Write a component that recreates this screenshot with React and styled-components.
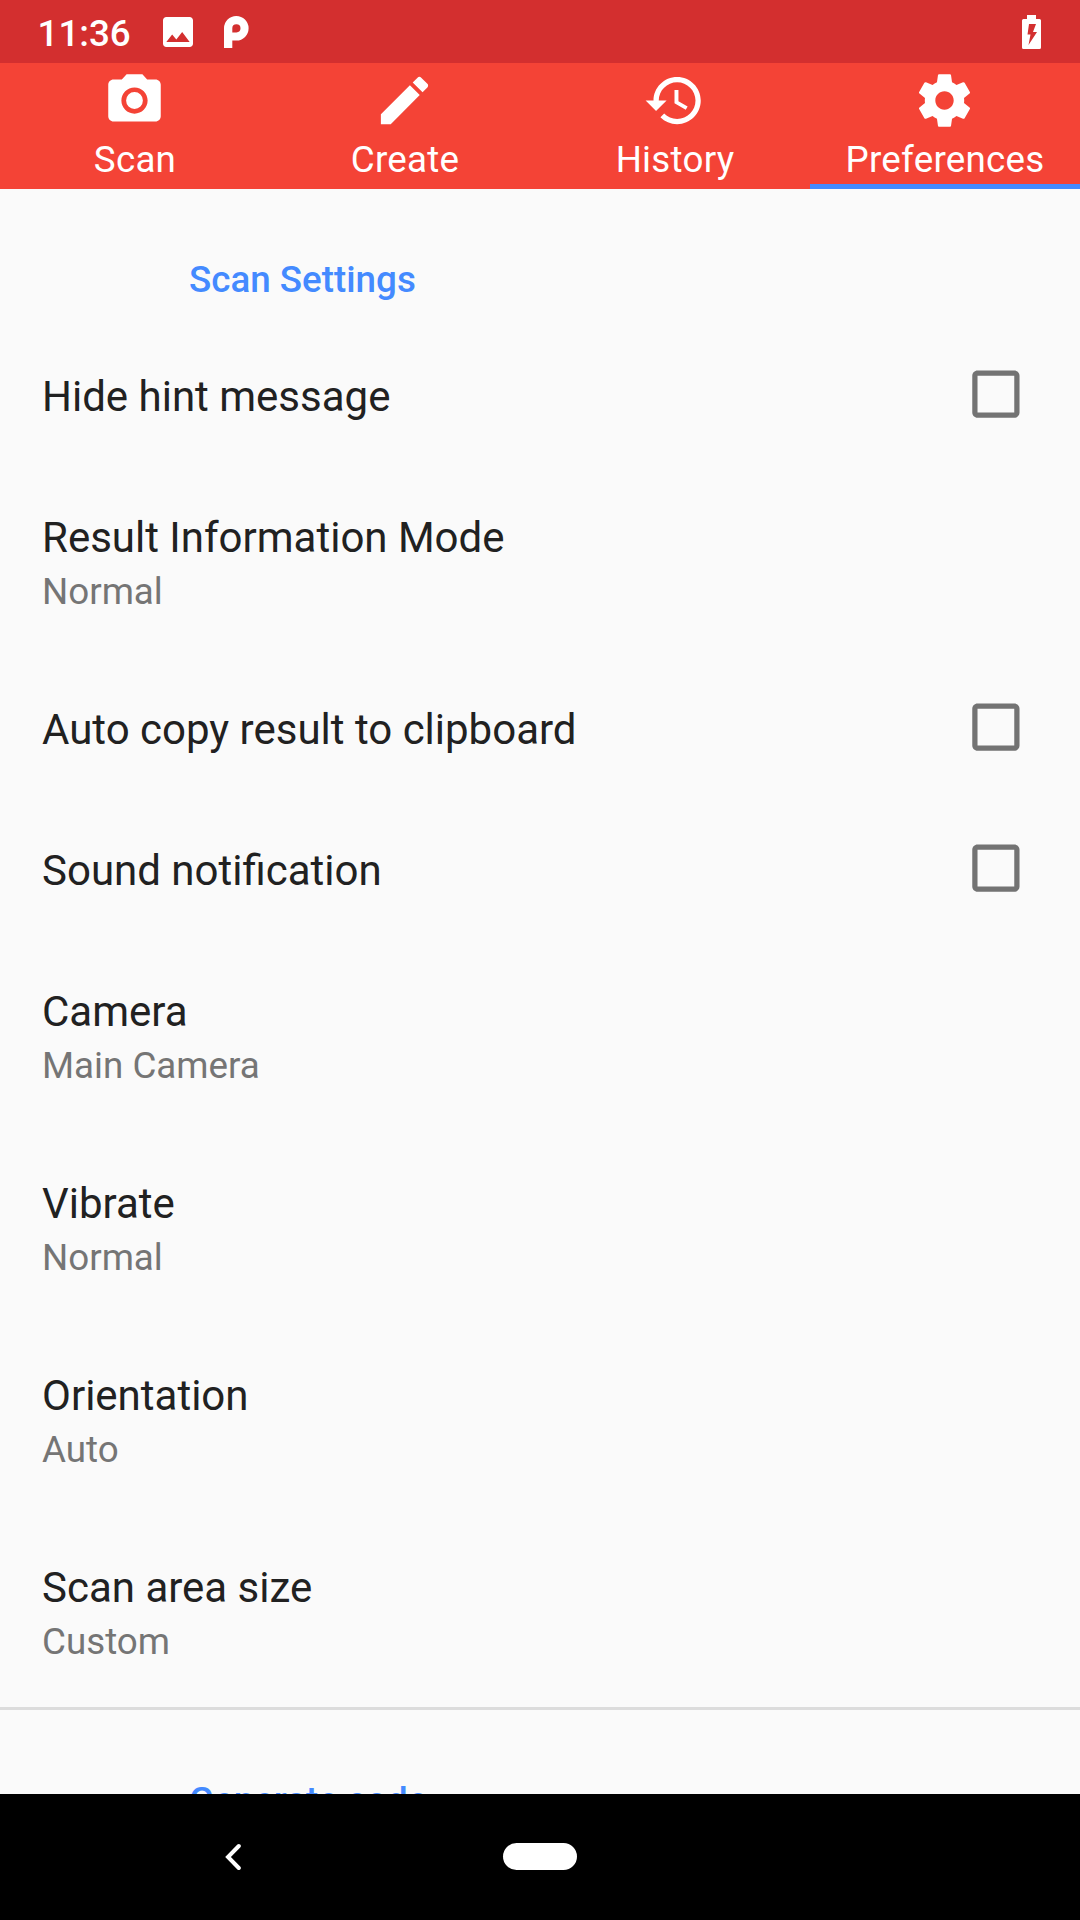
import React from "react";
import styled, { createGlobalStyle } from "styled-components";

const Global = createGlobalStyle`
  html, body { margin: 0; padding: 0; background: #fafafa; }
  * { box-sizing: border-box; }
`;

const Screen = styled.div`
  width: 1080px;
  height: 1920px;
  display: flex;
  flex-direction: column;
  overflow: hidden;
  background: #fafafa;
  font-family: Roboto, "Liberation Sans", sans-serif;
`;

const StatusBar = styled.header`
  height: 63px;
  flex: none;
  display: flex;
  align-items: center;
  justify-content: space-between;
  padding: 0 39px 0 37.5px;
  background: #d32f2f;
  color: #fff;
`;

const StatusGroup = styled.div`
  display: flex;
  align-items: center;
`;

const Clock = styled.span`
  width: 125.5px;
  padding-top: 3px;
  font-size: 36.75px;
  line-height: 43px;
  font-weight: 500;
`;

const StatusIcon = styled.svg`
  display: block;
  fill: #fff;
  margin-left: ${(p) => p.$gap || 0}px;
`;

const TabBar = styled.nav`
  height: 126px;
  flex: none;
  display: grid;
  grid-template-columns: repeat(4, 1fr);
  background: #f44336;
`;

const Tab = styled.div`
  display: flex;
  flex-direction: column;
  align-items: center;
  gap: 6px;
  padding-top: 6px;
  color: #fff;
  font-size: 36.75px;
  line-height: 43px;
  letter-spacing: 0.25px;
  box-shadow: ${(p) => (p.$active ? "inset 0 -5px #448aff" : "none")};
`;

const TabIcon = styled.svg`
  width: 63px;
  height: 63px;
  margin-right: 1px;
  fill: #fff;
`;

const Content = styled.main`
  flex: 1;
  min-height: 0;
  overflow: hidden;
`;

const SectionTitle = styled.h2`
  margin: 0;
  height: 137px;
  padding: 69px 0 0 189px;
  font-size: 36.75px;
  line-height: 43px;
  font-weight: 500;
  color: #448aff;
`;

const Row = styled.div`
  display: flex;
  justify-content: space-between;
  padding: 46px 53px 46px 42px;
`;

const RowText = styled.div`
  display: flex;
  flex-direction: column;
  gap: 8px;
`;

const RowTitle = styled.div`
  font-size: 42px;
  line-height: 49px;
  color: #212121;
`;

const RowSummary = styled.div`
  font-size: 36.75px;
  line-height: 43px;
  color: #757575;
`;

const Checkbox = styled.svg`
  width: 63px;
  height: 63px;
  margin: -9px 0 -5px;
  fill: #737373;
`;

const Divider = styled.hr`
  height: 3px;
  margin: -2px 0 0;
  border: 0;
  background: #dcdcdc;
`;

const NavBar = styled.footer`
  height: 126px;
  flex: none;
  display: grid;
  grid-template-columns: 466px 148px 466px;
  align-items: center;
  justify-items: center;
  background: #000;
`;

const HomePill = styled.div`
  width: 74px;
  height: 27px;
  margin-bottom: 1px;
  border-radius: 14px;
  background: #fff;
`;

const tabs = [
  ["Scan", "M9 2L7.17 4H4c-1.1 0-2 .9-2 2v12c0 1.1.9 2 2 2h16c1.1 0 2-.9 2-2V6c0-1.1-.9-2-2-2h-3.17L15 2H9zm3 15c-2.76 0-5-2.24-5-5s2.24-5 5-5 5 2.24 5 5-2.24 5-5 5zM15.2 12a3.2 3.2 0 1 1-6.4 0 3.2 3.2 0 0 1 6.4 0z"],
  ["Create", "M3 17.25V21h3.75L17.81 9.94l-3.75-3.75L3 17.25zM20.71 7.04c.39-.39.39-1.02 0-1.41l-2.34-2.34c-.39-.39-1.02-.39-1.41 0l-1.83 1.83 3.75 3.75 1.83-1.83z"],
  ["History", "M13 3c-4.97 0-9 4.03-9 9H1l3.89 3.89.07.14L9 12H6c0-3.87 3.13-7 7-7s7 3.13 7 7-3.13 7-7 7c-1.93 0-3.68-.79-4.94-2.06l-1.42 1.42C8.27 19.99 10.51 21 13 21c4.97 0 9-4.03 9-9s-4.03-9-9-9zm-1 5v5l4.28 2.54.72-1.21-3.5-2.08V8H12z"],
  ["Preferences", "M19.43 12.98c.04-.32.07-.64.07-.98s-.03-.66-.07-.98l2.11-1.65c.19-.15.24-.42.12-.64l-2-3.46c-.12-.22-.39-.3-.61-.22l-2.49 1c-.52-.4-1.08-.73-1.69-.98l-.38-2.65C14.46 2.18 14.25 2 14 2h-4c-.25 0-.46.18-.49.42l-.38 2.65c-.61.25-1.17.59-1.69.98l-2.49-1c-.23-.09-.49 0-.61.22l-2 3.46c-.13.22-.07.49.12.64l2.11 1.65c-.04.32-.07.65-.07.98s.03.66.07.98l-2.11 1.65c-.19.15-.24.42-.12.64l2 3.46c.12.22.39.3.61.22l2.49-1c.52.4 1.08.73 1.69.98l.38 2.65c.03.24.24.42.49.42h4c.25 0 .46-.18.49-.42l.38-2.65c.61-.25 1.17-.59 1.69-.98l2.49 1c.23.09.49 0 .61-.22l2-3.46c.12-.22.07-.49-.12-.64l-2.11-1.65zM12 15.5c-1.93 0-3.5-1.57-3.5-3.5s1.57-3.5 3.5-3.5 3.5 1.57 3.5 3.5-1.57 3.5-3.5 3.5z"],
];

const settings = [
  { title: "Hide hint message", checkbox: true },
  { title: "Result Information Mode", summary: "Normal" },
  { title: "Auto copy result to clipboard", checkbox: true },
  { title: "Sound notification", checkbox: true },
  { title: "Camera", summary: "Main Camera" },
  { title: "Vibrate", summary: "Normal" },
  { title: "Orientation", summary: "Auto" },
  { title: "Scan area size", summary: "Custom" },
];

export default function App() {
  return (
    <Screen>
      <Global />
      <StatusBar>
        <StatusGroup>
          <Clock>11:36</Clock>
          <StatusIcon width="30" height="30" viewBox="3 3 18 18">
            <path d="M21 19V5c0-1.1-.9-2-2-2H5c-1.1 0-2 .9-2 2v14c0 1.1.9 2 2 2h14c1.1 0 2-.9 2-2zM8.5 13.5l2.5 3.01L14.5 12l4.5 6H5l3.5-4.5z" />
          </StatusIcon>
          <StatusIcon $gap={30.5} width="26" height="32" viewBox="0 0 26 32">
            <path fillRule="evenodd" d="M0 32V12.300A12.300 12.300 0 1 1 12.400 24.600H8.300V32ZM8.300 16.400V12.300A4.100 4.100 0 1 1 12.400 16.400Z" />
          </StatusIcon>
        </StatusGroup>
        <StatusIcon width="19" height="34" viewBox="0 0 19 34">
          <path fillRule="evenodd" d="M5 0H14V4H17.500Q19 4 19 5.500V32.500Q19 34 17.500 34H1.500Q0 34 0 32.500V5.500Q0 4 1.500 4H5ZM7 9L5.500 19.500H8.500L6.500 30L15 17H11L14 9Z" />
        </StatusIcon>
      </StatusBar>
      <TabBar>
        {tabs.map(([label, path]) => (
          <Tab key={label} $active={label === "Preferences"}>
            <TabIcon viewBox="0 0 24 24"><path d={path} /></TabIcon>
            {label}
          </Tab>
        ))}
      </TabBar>
      <Content>
        <SectionTitle>Scan Settings</SectionTitle>
        {settings.map((s) => (
          <Row key={s.title}>
            <RowText>
              <RowTitle>{s.title}</RowTitle>
              {s.summary && <RowSummary>{s.summary}</RowSummary>}
            </RowText>
            {s.checkbox && (
              <Checkbox viewBox="-0.15 0.15 24 24">
                <path d="M19 5v14H5V5h14m0-2H5c-1.1 0-2 .9-2 2v14c0 1.1.9 2 2 2h14c1.1 0 2-.9 2-2V5c0-1.1-.9-2-2-2z" />
              </Checkbox>
            )}
          </Row>
        ))}
        <Divider />
        <SectionTitle>Generate code</SectionTitle>
      </Content>
      <NavBar>
        <svg width="16" height="28" viewBox="0 0 16 28">
          <path d="M13.800 3L3 14L13.800 25" fill="none" stroke="#fff" strokeWidth="4" strokeLinecap="round" />
        </svg>
        <HomePill />
      </NavBar>
    </Screen>
  );
}
